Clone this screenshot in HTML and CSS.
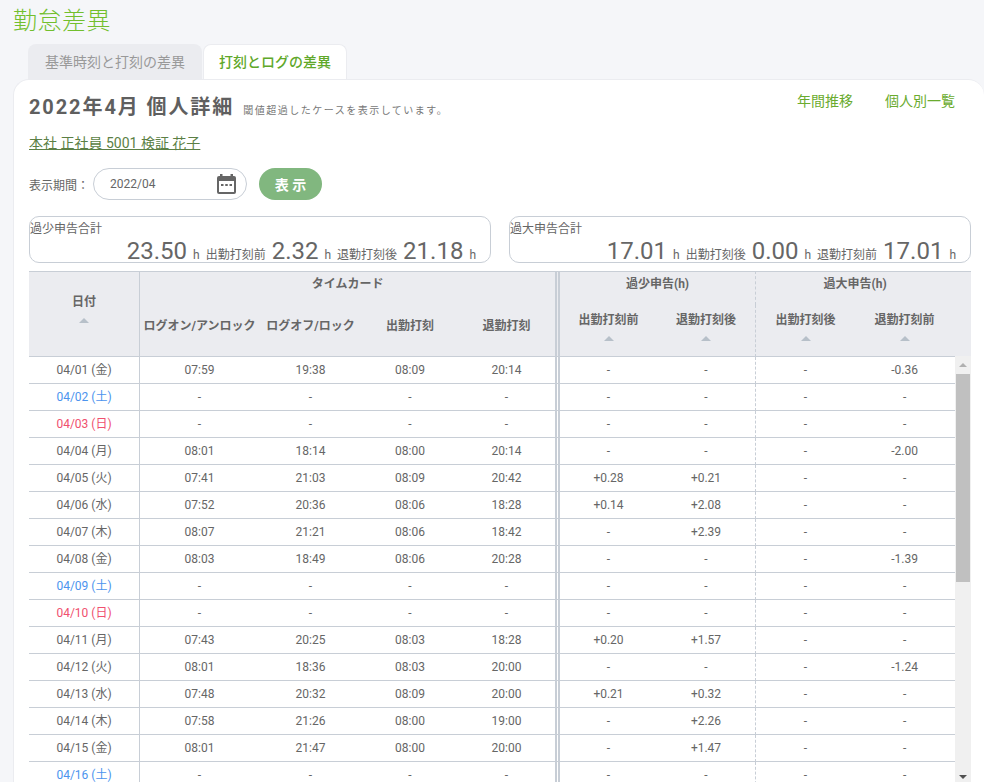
FILE: index.html
```html
<!DOCTYPE html>
<html lang="ja">
  <head>
    <meta charset="UTF-8" />
    <title>勤怠差異</title>
    <link rel="stylesheet" href="styles.css">
  </head>
  <body>
    <h1 class="page-title">勤怠差異</h1>

    <div class="tabs">
      <div class="tab">基準時刻と打刻の差異</div>
      <div class="tab tab-active">打刻とログの差異</div>
    </div>

    <div class="card">
      <div class="card-head">
        <div class="heading">
          <span class="heading-main">2022年4月 個人詳細</span>
          <span class="heading-note">閾値超過したケースを表示しています。</span>
        </div>
        <div class="head-links">
          <a class="head-link">年間推移</a>
          <a class="head-link">個人別一覧</a>
        </div>
      </div>

      <a class="person">本社 正社員 5001 検証 花子</a>

      <div class="filter">
        <span class="filter-label">表示期間：</span>
        <div class="date-input">
          <span>2022/04</span>
          <svg class="date-icon" width="19" height="20" viewBox="0 0 19 20">
            <rect x="0" y="2" width="19" height="18" rx="2" fill="#666" />
            <rect x="3" y="0" width="2.5" height="4" fill="#666" />
            <rect x="13.5" y="0" width="2.5" height="4" fill="#666" />
            <rect x="2" y="7" width="15" height="11" fill="#fff" />
            <rect x="4" y="10" width="2.5" height="2" fill="#666" />
            <rect x="8.25" y="10" width="2.5" height="2" fill="#666" />
            <rect x="12.5" y="10" width="2.5" height="2" fill="#666" />
          </svg>
        </div>
        <button type="button" class="btn-show">表 示</button>
      </div>

      <div class="summary">
        <div class="summary-box">
          <div class="summary-title">過少申告合計</div>
          <div class="summary-values">
            <span class="num">23.50</span><span class="unit">h</span>
            <span class="sum-label">出勤打刻前</span>
            <span class="num">2.32</span><span class="unit">h</span>
            <span class="sum-label">退勤打刻後</span>
            <span class="num">21.18</span><span class="unit">h</span>
          </div>
        </div>
        <div class="summary-box">
          <div class="summary-title">過大申告合計</div>
          <div class="summary-values">
            <span class="num">17.01</span><span class="unit">h</span>
            <span class="sum-label">出勤打刻後</span>
            <span class="num">0.00</span><span class="unit">h</span>
            <span class="sum-label">退勤打刻前</span>
            <span class="num">17.01</span><span class="unit">h</span>
          </div>
        </div>
      </div>

      <div class="table-wrap">
        <table class="diff-table">
          <colgroup>
            <col class="col-date" />
            <col class="col-logon" />
            <col class="col-logoff" />
            <col class="col-in" />
            <col class="col-out" />
            <col class="col-v1" />
            <col class="col-v2" />
            <col class="col-v3" />
            <col class="col-v4" />
            <col class="col-bar" />
          </colgroup>
          <thead>
            <tr class="head-top">
              <th rowspan="2" class="date-cell">日付<i class="sort"></i></th>
              <th colspan="4" class="split">タイムカード</th>
              <th colspan="2">過少申告(h)</th>
              <th colspan="2" class="dash">過大申告(h)</th>
              <th></th>
            </tr>
            <tr class="head-sub">
              <th class="tc">ログオン/アンロック</th>
              <th class="tc">ログオフ/ロック</th>
              <th class="tc">出勤打刻</th>
              <th class="tc split">退勤打刻</th>
              <th>出勤打刻前<i class="sort"></i></th>
              <th>退勤打刻後<i class="sort"></i></th>
              <th class="dash">出勤打刻後<i class="sort"></i></th>
              <th>退勤打刻前<i class="sort"></i></th>
              <th></th>
            </tr>
          </thead>
          <tbody>
            <tr><td class="date-cell">04/01 (金)</td><td>07:59</td><td>19:38</td><td>08:09</td><td class="split">20:14</td><td>-</td><td>-</td><td class="dash">-</td><td>-0.36</td><td></td></tr>
            <tr><td class="date-cell sat">04/02 (土)</td><td>-</td><td>-</td><td>-</td><td class="split">-</td><td>-</td><td>-</td><td class="dash">-</td><td>-</td><td></td></tr>
            <tr><td class="date-cell sun">04/03 (日)</td><td>-</td><td>-</td><td>-</td><td class="split">-</td><td>-</td><td>-</td><td class="dash">-</td><td>-</td><td></td></tr>
            <tr><td class="date-cell">04/04 (月)</td><td>08:01</td><td>18:14</td><td>08:00</td><td class="split">20:14</td><td>-</td><td>-</td><td class="dash">-</td><td>-2.00</td><td></td></tr>
            <tr><td class="date-cell">04/05 (火)</td><td>07:41</td><td>21:03</td><td>08:09</td><td class="split">20:42</td><td>+0.28</td><td>+0.21</td><td class="dash">-</td><td>-</td><td></td></tr>
            <tr><td class="date-cell">04/06 (水)</td><td>07:52</td><td>20:36</td><td>08:06</td><td class="split">18:28</td><td>+0.14</td><td>+2.08</td><td class="dash">-</td><td>-</td><td></td></tr>
            <tr><td class="date-cell">04/07 (木)</td><td>08:07</td><td>21:21</td><td>08:06</td><td class="split">18:42</td><td>-</td><td>+2.39</td><td class="dash">-</td><td>-</td><td></td></tr>
            <tr><td class="date-cell">04/08 (金)</td><td>08:03</td><td>18:49</td><td>08:06</td><td class="split">20:28</td><td>-</td><td>-</td><td class="dash">-</td><td>-1.39</td><td></td></tr>
            <tr><td class="date-cell sat">04/09 (土)</td><td>-</td><td>-</td><td>-</td><td class="split">-</td><td>-</td><td>-</td><td class="dash">-</td><td>-</td><td></td></tr>
            <tr><td class="date-cell sun">04/10 (日)</td><td>-</td><td>-</td><td>-</td><td class="split">-</td><td>-</td><td>-</td><td class="dash">-</td><td>-</td><td></td></tr>
            <tr><td class="date-cell">04/11 (月)</td><td>07:43</td><td>20:25</td><td>08:03</td><td class="split">18:28</td><td>+0.20</td><td>+1.57</td><td class="dash">-</td><td>-</td><td></td></tr>
            <tr><td class="date-cell">04/12 (火)</td><td>08:01</td><td>18:36</td><td>08:03</td><td class="split">20:00</td><td>-</td><td>-</td><td class="dash">-</td><td>-1.24</td><td></td></tr>
            <tr><td class="date-cell">04/13 (水)</td><td>07:48</td><td>20:32</td><td>08:09</td><td class="split">20:00</td><td>+0.21</td><td>+0.32</td><td class="dash">-</td><td>-</td><td></td></tr>
            <tr><td class="date-cell">04/14 (木)</td><td>07:58</td><td>21:26</td><td>08:00</td><td class="split">19:00</td><td>-</td><td>+2.26</td><td class="dash">-</td><td>-</td><td></td></tr>
            <tr><td class="date-cell">04/15 (金)</td><td>08:01</td><td>21:47</td><td>08:00</td><td class="split">20:00</td><td>-</td><td>+1.47</td><td class="dash">-</td><td>-</td><td></td></tr>
            <tr><td class="date-cell sat">04/16 (土)</td><td>-</td><td>-</td><td>-</td><td class="split">-</td><td>-</td><td>-</td><td class="dash">-</td><td>-</td><td></td></tr>
          </tbody>
        </table>

        <div class="scrollbar">
          <i class="arrow-up"></i>
          <div class="thumb"></div>
          <i class="arrow-down"></i>
        </div>
      </div>
    </div>
  </body>
</html>
```

FILE: styles.css
```css
html,
body {
  height: 782px;
  overflow: hidden;
}
body {
  margin: 0;
  background: #f5f6f9;
  color: #666;
  font-family: Roboto, "Noto Sans CJK JP", sans-serif;
  font-size: 12px;
}
a {
  cursor: pointer;
}

.page-title {
  margin: 0;
  padding: 4px 0 0 13px;
  height: 44px;
  box-sizing: border-box;
  font-size: 24px;
  line-height: 34px;
  font-weight: 300;
  color: #72bf2d;
  letter-spacing: 0.5px;
}

.tabs {
  display: flex;
  height: 35px;
  padding-left: 28px;
}
.tab {
  width: 174px;
  box-sizing: border-box;
  margin-right: 1px;
  background: #ebecf0;
  border-radius: 8px 8px 0 0;
  text-align: center;
  font-size: 14px;
  line-height: 36px;
  color: #999;
}
.tab-active {
  width: 144px;
  background: #fff;
  border: 1px solid #ebecf0;
  border-bottom: 0;
  color: #5fa82a;
  font-weight: 500;
  line-height: 34px;
}

.card {
  margin-left: 13px;
  height: 703px;
  box-sizing: border-box;
  padding: 0 13px 0 15px;
  background: #fff;
  border: 1px solid #ebecf0;
  border-right: 0;
  border-bottom: 0;
  border-radius: 16px 16px 0 0;
}
.card-head {
  display: flex;
  justify-content: space-between;
  height: 51px;
}
.heading {
  padding-top: 14px;
  line-height: 26px;
}
.heading-main {
  font-size: 20px;
  font-weight: 700;
  letter-spacing: 1.9px;
  color: #5f5f5f;
}
.heading-note {
  margin-left: 6px;
  font-size: 10px;
  letter-spacing: 1.5px;
  color: #777;
}
.head-links {
  display: flex;
  gap: 32px;
  padding: 10px 16px 0 0;
  font-size: 14px;
  line-height: 22px;
}
.head-link {
  color: #6aab2e;
}
.person {
  display: block;
  width: max-content;
  font-size: 14px;
  line-height: 24px;
  color: #5b7f45;
  text-decoration: underline;
}

.filter {
  display: flex;
  align-items: center;
  margin-top: 13px;
  height: 32px;
}
.filter-label {
  width: 64px;
}
.date-input {
  display: flex;
  align-items: center;
  justify-content: space-between;
  width: 154px;
  height: 32px;
  box-sizing: border-box;
  padding: 0 10px 0 16px;
  border: 1px solid #c8ced6;
  border-radius: 16px;
}
.btn-show {
  width: 63px;
  height: 32px;
  margin-left: 12px;
  padding: 0;
  border: 0;
  border-radius: 16px;
  background: #81b77f;
  color: #fff;
  font-family: inherit;
  font-size: 14px;
  font-weight: 700;
}

.summary {
  display: flex;
  gap: 18px;
  margin-top: 16px;
  width: 942px;
}
.summary-box {
  flex: 1;
  height: 47px;
  box-sizing: border-box;
  padding: 4px 14px 0 0;
  border: 1px solid #c8ced6;
  border-radius: 10px;
}
.summary-title {
  line-height: 16px;
}
.summary-values {
  display: flex;
  align-items: baseline;
  justify-content: flex-end;
  line-height: 24px;
  margin-top: 2px;
}
.num {
  font-size: 24px;
  color: #666;
}
.unit {
  margin: 0 6px;
  font-size: 12px;
}
.unit:last-child {
  margin-right: 0;
}
.sum-label {
  margin-right: 6px;
}

.table-wrap {
  position: relative;
  margin-top: 8px;
  width: 942px;
  height: 511px;
  overflow: hidden;
}
.diff-table {
  width: 942px;
  table-layout: fixed;
  border-collapse: separate;
  border-spacing: 0;
}
.col-date { width: 111px; }
.col-logon { width: 119px; }
.col-logoff { width: 103px; }
.col-in { width: 96px; }
.col-out { width: 102px; }
.col-v1 { width: 97px; }
.col-v2 { width: 98px; }
.col-v3 { width: 100px; }
.col-v4 { width: 99px; }
.col-bar { width: 17px; }

.diff-table th {
  padding: 0;
  background: #ebecf0;
  font-weight: 700;
  color: #666;
  vertical-align: top;
  text-align: center;
  line-height: 16px;
}
.head-top th {
  height: 34px;
  padding-top: 4px;
  box-sizing: border-box;
  border-top: 1px solid #c8ced6;
}
.head-sub th {
  height: 52px;
  padding-top: 7px;
  box-sizing: border-box;
  border-bottom: 1px solid #c8ced6;
}
.diff-table .head-sub .tc {
  padding-top: 13px;
}
.diff-table .date-cell {
  border-right: 1px solid #c8ced6;
}
.diff-table th.date-cell {
  padding-top: 22px;
  border-bottom: 1px solid #c8ced6;
}
.diff-table .split {
  border-right: 5px double #c8ced6;
}
.diff-table .dash {
  border-left: 1px dashed #c8ced6;
}
.sort {
  display: block;
  width: 0;
  margin: 8px auto 0;
  border-left: 5px solid transparent;
  border-right: 5px solid transparent;
  border-bottom: 5px solid #b7c0c9;
}

.diff-table td {
  height: 27px;
  box-sizing: border-box;
  padding: 0;
  border-bottom: 1px solid #c8ced6;
  text-align: center;
  line-height: 26px;
  color: #666;
}
.diff-table td.sat {
  color: #4c94ee;
}
.diff-table td.sun {
  color: #f0506e;
}

.scrollbar {
  position: absolute;
  top: 85px;
  right: 0;
  bottom: 0;
  width: 16px;
  background: #f0f0f0;
}
.thumb {
  position: absolute;
  top: 18px;
  left: 1px;
  width: 14px;
  height: 208px;
  background: #c0c0c0;
}
.arrow-up,
.arrow-down {
  position: absolute;
  left: 4px;
  border-left: 4px solid transparent;
  border-right: 4px solid transparent;
}
.arrow-up {
  top: 7px;
  border-bottom: 4px solid #b0b0b0;
}
.arrow-down {
  bottom: 3px;
  border-top: 4px solid #505050;
}
```
